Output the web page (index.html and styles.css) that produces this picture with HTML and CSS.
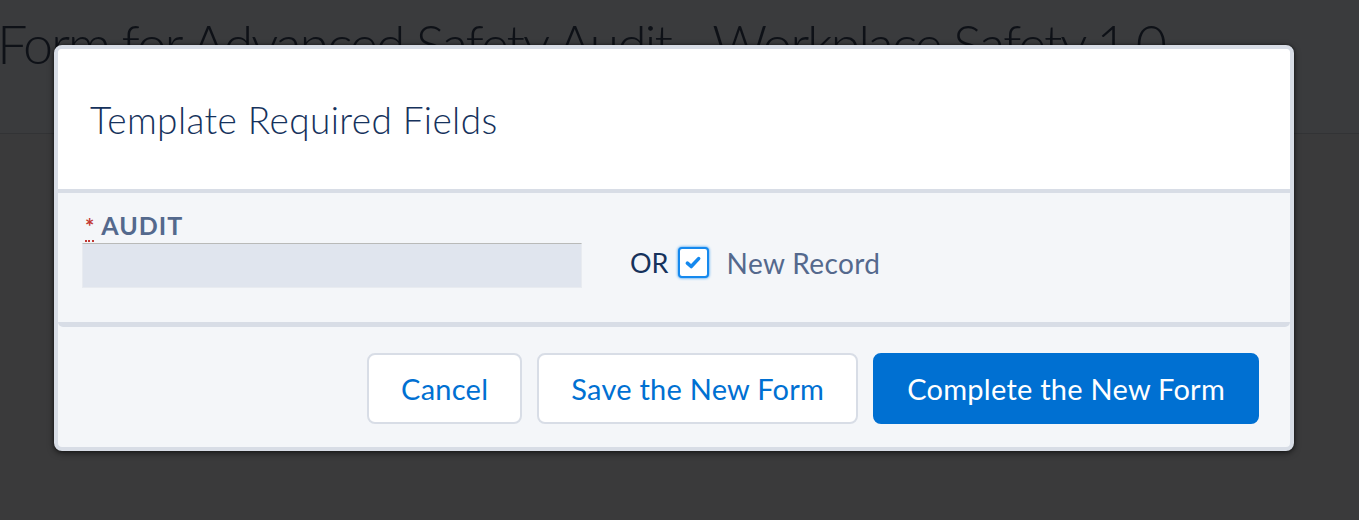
FILE: index.html
```html
<!DOCTYPE html>
<html>
<head>
<meta charset="utf-8">
<link rel="stylesheet" href="styles.css">
</head>
<body>
<div class="page">
  <header class="page-header">
    <h1 class="page-title">Form for Advanced Safety Audit - Workplace Safety 1.0</h1>
  </header>
  <div class="page-rest"></div>

  <div class="modal">
    <div class="modal-header">
      <h2 class="modal-title">Template Required Fields</h2>
    </div>
    <div class="modal-body">
      <div class="field">
        <label class="field-label"><abbr class="req" title="required">*</abbr>AUDIT</label>
        <div class="field-input"></div>
      </div>
      <div class="alt">
        <span class="or">OR</span>
        <span class="checkbox">
          <svg viewBox="0 0 16 16" width="18" height="18"><path d="M3 9 L6.4 12 L13 5" fill="none" stroke="#1589ee" stroke-width="3.2" stroke-linecap="round" stroke-linejoin="round"/></svg>
        </span>
        <span class="alt-label">New Record</span>
      </div>
    </div>
    <div class="modal-footer">
      <button class="btn">Cancel</button>
      <button class="btn">Save the New Form</button>
      <button class="btn btn-brand">Complete the New Form</button>
    </div>
  </div>
</div>
</body>
</html>
```
FILE: styles.css
```css
* { box-sizing: border-box; }
html, body { margin: 0; padding: 0; }
body {
  width: 1359px;
  height: 520px;
  overflow: hidden;
  background: #3a3a3b;
  font-family: Lato, "Liberation Sans", sans-serif;
}
.page { position: relative; height: 520px; }
.page-header {
  height: 134px;
  background: #3a3b3d;
  border-bottom: 1px solid #323335;
  overflow: hidden;
}
.page-title {
  margin: 0;
  padding: 13px 0 0 0;
  margin-left: -3px;
  font-weight: 300;
  font-size: 54px;
  line-height: 62px;
  color: #0e1117;
  white-space: nowrap;
  letter-spacing: -2.2px;
}
.modal {
  position: absolute;
  left: 54px;
  top: 45px;
  width: 1240px;
  border: 4px solid #d8dde6;
  border-radius: 8px;
  background: #f4f6f9;
  box-shadow: 0 2px 6px rgba(0,0,0,0.55), 0 0 3px rgba(0,0,0,0.4);
}
.modal-header {
  height: 144px;
  background: #fff;
  border-bottom: 4px solid #d8dde6;
  border-radius: 4px 4px 0 0;
  display: flex;
  align-items: center;
  padding-left: 32px;
}
.modal-title {
  margin: 0;
  font-weight: 300;
  font-size: 37px;
  color: #16325c;
  letter-spacing: 0.4px;
}
.modal-body {
  height: 134px;
  background: #f4f6f9;
  border-bottom: 5px solid #d8dde6;
  border-radius: 0 0 5px 5px;
  padding: 17px 24px 0 24px;
  display: flex;
  align-items: flex-start;
}
.field { width: 500px; }
.field-label {
  display: block;
  font-weight: 700;
  font-size: 25px;
  line-height: 30px;
  color: #54698d;
  letter-spacing: 1px;
  padding-left: 3px;
}
.req {
  color: #c23934;
  text-decoration: none;
  border-bottom: 2px dotted #c23934;
  margin-right: 7px;
  font-size: 22px;
  letter-spacing: 0;
}
.field-input {
  margin-top: 1px;
  height: 45px;
  width: 500px;
  background: #e0e5ee;
  border: 1px solid #e8ebf0;
  border-top-color: #b9bab8;
}
.alt {
  display: flex;
  align-items: center;
  margin-left: 48px;
  margin-top: 35px;
  height: 34px;
}
.or {
  font-size: 27px;
  color: #16325c;
}
.checkbox {
  width: 31px;
  height: 31px;
  margin-left: 9px;
  border: 2px solid #1589ee;
  border-radius: 4px;
  background: #fff;
  box-shadow: 0 0 3px #1589ee;
  display: flex;
  align-items: center;
  justify-content: center;
}
.alt-label {
  margin-left: 18px;
  font-size: 28px;
  letter-spacing: 0.4px;
  color: #54698d;
  margin-top: 2px;
}
.modal-footer {
  height: 120px;
  display: flex;
  justify-content: flex-end;
  align-items: center;
  padding-right: 31px;
  padding-top: 3px;
  gap: 15px;
}
.btn {
  height: 71px;
  padding: 0 32px;
  border: 2px solid #d8dde6;
  border-radius: 8px;
  background: #fff;
  color: #0070d2;
  font-family: Lato, "Liberation Sans", sans-serif;
  font-size: 29px;
  letter-spacing: 0.25px;
  cursor: pointer;
}
.btn-brand {
  background: #0070d2;
  border-color: #0070d2;
  color: #fff;
}
```
